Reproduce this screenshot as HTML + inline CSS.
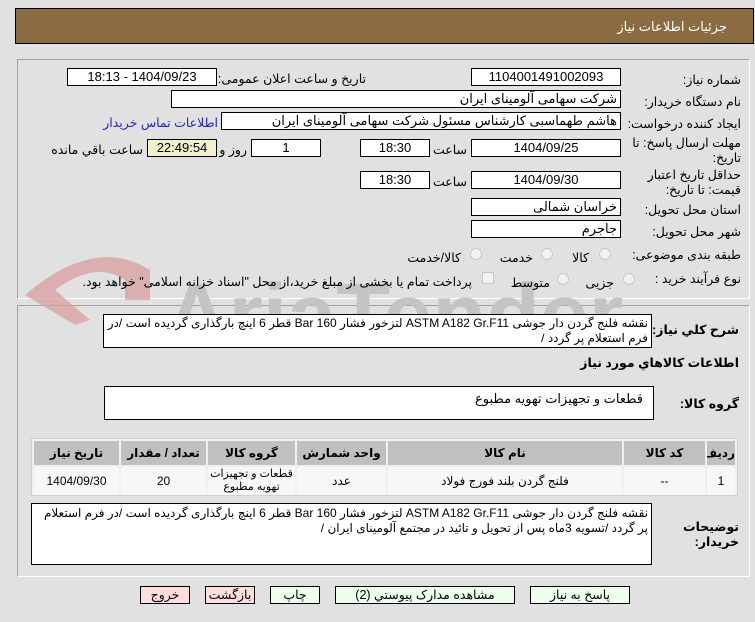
<!DOCTYPE html>
<html><head><meta charset="utf-8">
<style>
*{box-sizing:border-box;margin:0;padding:0}
body{width:755px;height:622px;background:#e1e1e1;font-family:"Liberation Sans","DejaVu Sans",sans-serif;font-size:12px;color:#000;position:relative;overflow:hidden}
.a{position:absolute;white-space:nowrap}
.box{position:absolute;background:#fff;border:1px solid #000;height:18px;line-height:16px;font-size:13px;direction:rtl;padding:0 3px}
.c{text-align:center}
.l{position:absolute;direction:rtl;text-align:right;font-size:12.5px}
.rad{position:absolute;width:12px;height:12px;border-radius:50%;border:1px solid #c8c8c8;background:#f2f2f2}
.btn{position:absolute;height:18px;border:1px solid #000;text-align:center;line-height:16px;font-size:12.5px}
table{border-collapse:separate;border-spacing:2px;table-layout:fixed}
td{font-size:12px;text-align:center;overflow:hidden;padding:0}
</style></head><body>
<div class="a" style="left:15px;top:8px;width:739px;height:36px;background:#8b6b42;border:1px solid #000"></div>
<div class="l" style="right:28px;top:19px;color:#fff;font-size:13px">جزئیات اطلاعات نیاز</div>

<div class="a" style="left:17px;top:59px;width:733px;height:240px;border:1px solid #a0a0a0;border-right-color:#fff;border-bottom-color:#fff"></div>
<div class="a" style="left:17px;top:305px;width:733px;height:272px;border:1px solid #a0a0a0;border-right-color:#fff;border-bottom-color:#fff"></div>

<svg class="a" style="left:15px;top:245px" width="620" height="110" viewBox="0 0 620 110">
<path d="M10 50 Q80 -10 135 25 L135 55 L110 55 L110 35 Q80 15 40 45 L75 75 L60 80 Z" fill="#d9a3a3" opacity=".8"/>
<text x="150" y="100" font-size="88" font-weight="bold" fill="#c4c4c4" font-family="Liberation Sans">AriaTender.net</text>
</svg>

<div class="l" style="right:14px;top:72px">شماره نیاز:</div>
<div class="box c" style="left:471px;top:68px;width:150px">1104001491002093</div>
<div class="l" style="right:389px;top:71px">تاریخ و ساعت اعلان عمومی:</div>
<div class="box c" style="left:67px;top:68px;width:150px">1404/09/23 - 18:13</div>

<div class="l" style="right:14px;top:94px">نام دستگاه خریدار:</div>
<div class="box" style="left:171px;top:90px;width:450px">شرکت سهامی آلومینای ایران</div>

<div class="l" style="right:14px;top:116px">ایجاد کننده درخواست:</div>
<div class="box" style="left:221px;top:112px;width:400px">هاشم طهماسبی کارشناس مسئول شرکت سهامی آلومینای ایران</div>
<div class="l" style="right:537px;top:115px;color:#2222cc">اطلاعات تماس خریدار</div>

<div class="l" style="right:14px;top:136px;line-height:15px;width:120px">مهلت ارسال پاسخ: تا تاریخ:</div>
<div class="box c" style="left:471px;top:139px;width:150px">1404/09/25</div>
<div class="l" style="right:288px;top:142px">ساعت</div>
<div class="box c" style="left:360px;top:139px;width:70px">18:30</div>
<div class="box c" style="left:251px;top:139px;width:70px">1</div>
<div class="l" style="right:508px;top:142px">روز و</div>
<div class="box c" style="left:147px;top:139px;width:70px;background:#f2f0cd">22:49:54</div>
<div class="l" style="right:612px;top:142px">ساعت باقي مانده</div>

<div class="l" style="right:14px;top:168px;line-height:15px;width:120px">حداقل تاریخ اعتبار قیمت: تا تاریخ:</div>
<div class="box c" style="left:471px;top:171px;width:150px">1404/09/30</div>
<div class="l" style="right:288px;top:174px">ساعت</div>
<div class="box c" style="left:360px;top:171px;width:70px">18:30</div>

<div class="l" style="right:14px;top:202px">استان محل تحویل:</div>
<div class="box" style="left:471px;top:198px;width:150px">خراسان شمالی</div>
<div class="l" style="right:14px;top:224px">شهر محل تحویل:</div>
<div class="box" style="left:471px;top:220px;width:150px">جاجرم</div>

<div class="l" style="right:14px;top:247px">طبقه بندی موضوعی:</div>
<div class="rad" style="left:599px;top:248px"></div><div class="l" style="right:166px;top:250px">کالا</div>
<div class="rad" style="left:541px;top:248px"></div><div class="l" style="right:222px;top:250px">خدمت</div>
<div class="rad" style="left:470px;top:248px"></div><div class="l" style="right:294px;top:250px">کالا/خدمت</div>

<div class="l" style="right:14px;top:271px">نوع فرآیند خرید :</div>
<div class="rad" style="left:623px;top:273px"></div><div class="l" style="right:141px;top:275px">جزیی</div>
<div class="rad" style="left:557px;top:273px"></div><div class="l" style="right:205px;top:275px">متوسط</div>
<div class="a" style="left:482px;top:272px;width:12px;height:12px;border:1px solid #c8c8c8;background:#f2f2f2"></div>
<div class="l" style="right:283px;top:274px">پرداخت تمام یا بخشی از مبلغ خرید،از محل "اسناد خزانه اسلامی" خواهد بود.</div>

<div class="l" style="right:16px;top:322px;font-weight:bold">شرح کلي نیاز:</div>
<div class="box" style="left:103px;top:314px;width:549px;height:34px;line-height:15px;white-space:normal;font-size:12px;padding-top:1px">نقشه فلنج گردن دار جوشی ASTM A182 Gr.F11 لتزخور فشار Bar 160 قطر 6 اینچ بارگذاری گردیده است /در فرم استعلام پر گردد /</div>
<div class="l" style="right:16px;top:355px;font-weight:bold">اطلاعات کالاهاي مورد نیاز</div>

<div class="l" style="right:16px;top:396px;font-weight:bold">گروه کالا:</div>
<div class="box" style="left:104px;top:386px;width:550px;height:34px;padding:4px 10px">قطعات و تجهیزات تهویه مطبوع</div>

<div class="a" style="left:31px;top:438px;width:707px;height:58px;border:1px solid #d0d0d0;background:#f0f0f0">
<table style="width:705px;direction:rtl">
<colgroup><col style="width:28px"><col style="width:81px"><col style="width:234px"><col style="width:89px"><col style="width:87px"><col style="width:85px"><col></colgroup>
<tr style="background:#c0c0c0;height:24px;font-weight:bold"><td>ردیف</td><td>کد کالا</td><td>نام کالا</td><td>واحد شمارش</td><td>گروه کالا</td><td>تعداد / مقدار</td><td>تاریخ نیاز</td></tr>
<tr style="background:#f7f7f7;height:28px"><td>1</td><td>--</td><td>فلنج گردن بلند فورج فولاد</td><td>عدد</td><td style="line-height:13px;white-space:normal;font-size:11px">قطعات و تجهیزات<br>تهویه مطبوع</td><td>20</td><td>1404/09/30</td></tr>
</table></div>

<div class="l" style="right:16px;top:520px;font-weight:bold;line-height:15px;width:60px">توضیحات خریدار:</div>
<div class="box" style="left:31px;top:503px;width:621px;height:62px;line-height:15px;white-space:normal;font-size:12px;padding-top:2px">نقشه فلنج گردن دار جوشی ASTM A182 Gr.F11 لتزخور فشار Bar 160 قطر 6 اینچ بارگذاری گردیده است /در فرم استعلام پر گردد /تسویه 3ماه پس از تحویل و تائید در مجتمع آلومینای ایران /</div>

<div class="btn" style="left:140px;top:586px;width:50px;background:#fdd">خروج</div>
<div class="btn" style="left:205px;top:586px;width:50px;background:#fdd">بازگشت</div>
<div class="btn" style="left:270px;top:586px;width:50px;background:#efe">چاپ</div>
<div class="btn" style="left:335px;top:586px;width:180px;background:#efe">مشاهده مدارک پیوستي (2)</div>
<div class="btn" style="left:530px;top:586px;width:100px;background:#efe">پاسخ به نیاز</div>
</body></html>
